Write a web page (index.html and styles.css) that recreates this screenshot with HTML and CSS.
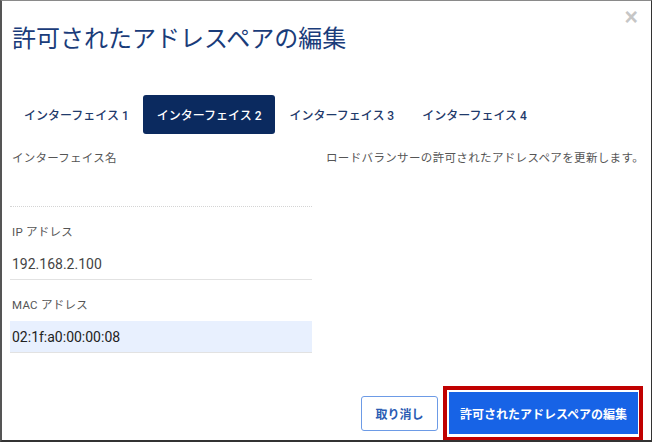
FILE: index.html
```html
<!DOCTYPE html>
<html lang="ja">
  <head>
    <meta charset="UTF-8" />
    <meta name="viewport" content="width=device-width, initial-scale=1.0" />
    <title>許可されたアドレスペアの編集</title>
    <link rel="stylesheet" href="styles.css">
  </head>
  <body>
    <div class="modal">
      <button class="close" title="閉じる">&times;</button>

      <h1 class="modal-title">許可されたアドレスペアの編集</h1>

      <!-- Interface tabs -->
      <div class="tabs">
        <button class="tab">インターフェイス 1</button>
        <button class="tab active">インターフェイス 2</button>
        <button class="tab">インターフェイス 3</button>
        <button class="tab">インターフェイス 4</button>
      </div>

      <div class="modal-body">
        <div class="form">
          <div class="field">
            <label>インターフェイス名</label>
            <div class="value dotted"></div>
          </div>
          <div class="field">
            <label>IP アドレス</label>
            <div class="value">192.168.2.100</div>
          </div>
          <div class="field">
            <label>MAC アドレス</label>
            <div class="value filled">02:1f:a0:00:00:08</div>
          </div>
        </div>
        <p class="description">ロードバランサーの許可されたアドレスペアを更新します。</p>
      </div>

      <div class="modal-footer">
        <button class="btn btn-cancel">取り消し</button>
        <div class="highlight">
          <button class="btn btn-primary">許可されたアドレスペアの編集</button>
        </div>
      </div>
    </div>
  </body>
</html>
```

FILE: styles.css
```css
body {
  margin: 0;
  background: white;
  font-family: Roboto, "Noto Sans CJK JP", sans-serif;
}
.modal {
  position: relative;
  box-sizing: border-box;
  width: 652px;
  height: 442px;
  border-top: 1px solid #8a8a8a;
  border-left: 2px solid #555;
  border-right: 1px solid #333;
  border-bottom: 2px solid #333;
  padding: 0 8px;
  display: flex;
  flex-direction: column;
}
.close {
  position: absolute;
  top: 5px;
  right: 13px;
  border: none;
  background: none;
  padding: 0;
  font-size: 23px;
  font-weight: bold;
  line-height: 22px;
  color: #c6c6c6;
  cursor: pointer;
}
.modal-title {
  margin: 19px 0 0 2px;
  font-family: "Noto Sans CJK JP", sans-serif;
  font-size: 24px;
  font-weight: 400;
  line-height: 34px;
  color: #1a3c7a;
}
.tabs {
  display: flex;
  margin-top: 41px;
}
.tab {
  border: none;
  background: none;
  height: 39px;
  padding: 0 14px;
  border-radius: 3px;
  font-family: Roboto, "Noto Sans CJK JP", sans-serif;
  font-size: 12px;
  font-weight: 500;
  color: #1f3a6b;
  cursor: pointer;
}
.tab.active {
  background: #0b2a5f;
  color: white;
}
.modal-body {
  display: flex;
  gap: 14px;
  margin-top: 16px;
}
.form {
  width: 302px;
  flex-shrink: 0;
}
.field + .field {
  margin-top: 17px;
}
.field label {
  display: block;
  padding-left: 2px;
  font-size: 11.5px;
  letter-spacing: 0.25px;
  line-height: 16px;
  color: #555;
}
.value {
  box-sizing: border-box;
  height: 32px;
  margin-top: 8px;
  padding: 0 2px;
  border-bottom: 1px solid #e2e2e2;
  font-size: 14px;
  line-height: 32px;
  color: #444;
}
.value.dotted {
  margin-top: 9px;
  border-bottom: 1px dotted #d4d4d4;
}
.value.filled {
  background: #e8f0fe;
  color: #222;
}
.description {
  margin: 0;
  white-space: nowrap;
  font-size: 11.5px;
  letter-spacing: 0.35px;
  line-height: 16px;
  color: #555;
}
.modal-footer {
  margin-top: auto;
  display: flex;
  justify-content: flex-end;
  align-items: center;
}
.btn {
  font-family: Roboto, "Noto Sans CJK JP", sans-serif;
  font-size: 12px;
  font-weight: bold;
  border-radius: 3px;
  cursor: pointer;
}
.btn-cancel {
  width: 77px;
  height: 35px;
  margin-right: 5px;
  background: white;
  border: 1px solid #6d9be6;
  color: #2b5cb3;
}
.highlight {
  border: 4px solid #c00000;
  border-bottom-width: 3px;
  padding: 2px 1px 3px 2px;
  background: white;
}
.btn-primary {
  display: block;
  width: 189px;
  height: 42px;
  border: none;
  border-radius: 0;
  background: #1763e6;
  color: white;
}
```
